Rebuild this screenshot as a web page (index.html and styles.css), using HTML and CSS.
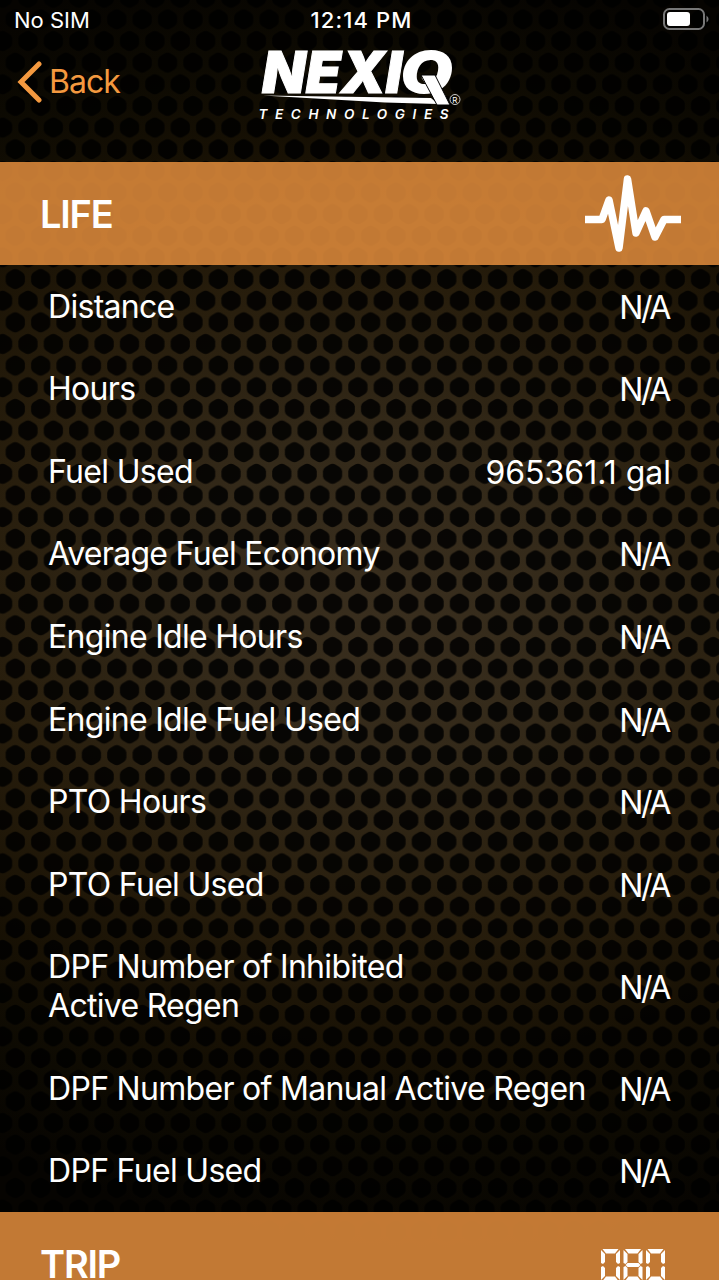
FILE: index.html
```
<!DOCTYPE html>
<html lang="en">
<head>
    <meta charset="UTF-8">
    <meta name="viewport" content="width=device-width, initial-scale=1.0">
    <title>Vehicle Data</title>
    <link rel="stylesheet" href="styles.css">
</head>
<body>
    <!-- honeycomb mesh behind the whole screen -->
    <svg class="mesh" width="719" height="1280" aria-hidden="true">
        <defs>
            <radialGradient id="glow" gradientUnits="userSpaceOnUse" cx="0" cy="0" r="1" gradientTransform="translate(385 605) rotate(8) scale(820 640)">
                <stop offset="0" stop-color="#392e1e"/>
                <stop offset="0.25" stop-color="#332919"/>
                <stop offset="0.5" stop-color="#271d0c"/>
                <stop offset="0.7" stop-color="#181104"/>
                <stop offset="0.85" stop-color="#0d0a02"/>
                <stop offset="1" stop-color="#060401"/>
            </radialGradient>
            <pattern id="holes" x="2.6" y="571.2" width="25.38" height="43.28" patternUnits="userSpaceOnUse">
                <g fill="#000" fill-opacity="0.86">
                    <path id="hex" d="M9.9 1.5Q12.7 .1 15.5 1.5L19.6 3.9Q22.2 5.5 22.3 8.3V13.3Q22.2 16.1 19.6 17.7L15.5 20.1Q12.7 21.5 9.9 20.1L5.8 17.7Q3.2 16.1 3.1 13.3V8.3Q3.2 5.5 5.8 3.9Z"/>
                    <use href="#hex" x="-12.69" y="21.64"/>
                    <use href="#hex" x="12.69" y="21.64"/>
                </g>
            </pattern>
        </defs>
        <rect width="719" height="1280" fill="url(#glow)"/>
        <rect width="719" height="1280" fill="url(#holes)"/>
    </svg>

    <header class="top">
        <div class="status">
            <span class="carrier">No SIM</span>
            <span class="time">12:14 PM</span>
            <svg class="battery" width="46" height="22" viewBox="0 0 46 22">
                <rect x="1" y="1" width="40" height="20" rx="5.5" fill="none" stroke="#777" stroke-width="2"/>
                <rect x="4" y="4" width="23" height="14" rx="3" fill="#fff"/>
                <path d="M43.5 7.5Q45.6 9 45.6 11T43.5 14.5Z" fill="#777"/>
            </svg>
        </div>
        <div class="nav">
            <a class="back">
                <svg width="26" height="42" viewBox="0 0 26 42">
                    <path d="M22 3L4 21L22 39" fill="none" stroke="#f4993f" stroke-width="5" stroke-linecap="round"/>
                </svg>
                <span>Back</span>
            </a>
            <svg class="logo" width="210" height="76" viewBox="0 0 210 76">
                <text class="logo-name" x="7" y="44.5" textLength="140" lengthAdjust="spacingAndGlyphs">NEXI</text>
                <text class="logo-name logo-q" x="145" y="45" textLength="53" lengthAdjust="spacingAndGlyphs">Q</text>
                <path d="M8 47.5L176 50L183 56L130 54.5Z" fill="#fff"/>
                <path d="M166 27H180L195 57H182Z" fill="#fff" stroke="#000" stroke-width="1"/>
                <circle cx="200" cy="51.5" r="5" fill="none" stroke="#ccc" stroke-width="1"/>
                <text class="logo-reg" x="197.3" y="54.5">R</text>
                <text class="logo-sub" x="3.5" y="71" textLength="190">TECHNOLOGIES</text>
            </svg>
        </div>
    </header>

    <div class="section">
        <h2>LIFE</h2>
        <svg class="pulse" width="96" height="80" viewBox="0 0 96 80">
            <path d="M0 45.5H17L24 26L34 74L42.5 5L51 59L61 37L70 63L79 45.5H96" fill="none" stroke="#fff" stroke-width="7.5" stroke-linejoin="round"/>
        </svg>
    </div>

    <ul class="list">
        <li><span>Distance</span><span class="value na">N/A</span></li>
        <li><span>Hours</span><span class="value na">N/A</span></li>
        <li><span>Fuel Used</span><span class="value">965361.1 gal</span></li>
        <li><span>Average Fuel Economy</span><span class="value na">N/A</span></li>
        <li><span>Engine Idle Hours</span><span class="value na">N/A</span></li>
        <li><span>Engine Idle Fuel Used</span><span class="value na">N/A</span></li>
        <li><span>PTO Hours</span><span class="value na">N/A</span></li>
        <li><span>PTO Fuel Used</span><span class="value na">N/A</span></li>
        <li class="tall"><span>DPF Number of Inhibited<br>Active Regen</span><span class="value na">N/A</span></li>
        <li><span>DPF Number of Manual Active Regen</span><span class="value na">N/A</span></li>
        <li><span>DPF Fuel Used</span><span class="value na">N/A</span></li>
    </ul>

    <div class="section trip">
        <h2>TRIP</h2>
        <svg class="counter" width="66" height="36" viewBox="0 0 66 36">
            <defs>
                <path id="bar" d="M1.5 0H17.5L14 4.5H5Z"/>
                <path id="side" d="M0 1L4 5V13L2 15L0 14Z"/>
                <g id="zero">
                    <use href="#bar"/>
                    <use href="#side"/>
                    <use href="#side" transform="translate(19 0) scale(-1 1)"/>
                    <use href="#side" transform="translate(0 32) scale(1 -1)"/>
                    <use href="#side" transform="translate(19 32) scale(-1 -1)"/>
                    <use href="#bar" transform="translate(0 32) scale(1 -1)"/>
                </g>
            </defs>
            <g fill="#fff">
                <use href="#zero" x="1"/>
                <use href="#zero" x="23.5"/>
                <path d="M27.5 14H38.5L40.5 16L38.5 18H27.5L25.5 16Z"/>
                <use href="#zero" x="46"/>
            </g>
        </svg>
    </div>
</body>
</html>
```
FILE: styles.css
```
* {
    box-sizing: border-box;
}
body {
    margin: 0;
    height: 1280px;
    overflow: hidden;
    background: #000;
    color: #fff;
    font-family: Inter, "Liberation Sans", sans-serif;
}
svg {
    display: block;
}
.mesh {
    position: absolute;
    top: 0;
    left: 0;
    z-index: -1;
}
.top {
    height: 162px;
}
.status {
    display: grid;
    grid-template-columns: 1fr auto 1fr;
    align-items: center;
    height: 40px;
    padding: 0 10px 0 14px;
    font-size: 22px;
    line-height: 26px;
}
.time {
    font-weight: 500;
    letter-spacing: 1.1px;
}
.battery {
    justify-self: end;
    margin-top: -2px;
}
.nav {
    display: grid;
    grid-template-columns: 1fr 210px 1fr;
    height: 82px;
}
.back {
    display: flex;
    align-items: center;
    gap: 6px;
    padding-left: 17px;
    color: #f4993f;
    font-size: 32px;
    letter-spacing: -1px;
}
.back span {
    padding-bottom: 1px;
}
.logo {
    margin-top: 8px;
}
.logo text {
    fill: #fff;
    font-style: italic;
}
.logo-name {
    font-size: 58px;
    font-weight: 900;
    stroke: #fff;
    stroke-width: 1px;
}
.logo-q {
    stroke: none;
}
.logo .logo-reg {
    font-size: 8px;
    font-style: normal;
}
.logo-sub {
    font-size: 13.5px;
    font-weight: 600;
}
.section {
    display: flex;
    justify-content: space-between;
    align-items: center;
    height: 103px;
    padding: 0 38px 0 40px;
    background: rgba(226, 141, 60, 0.86);
}
.section h2 {
    margin: 0;
    font-size: 38px;
    font-weight: 600;
    letter-spacing: -1.2px;
}
.section.trip {
    padding-right: 53px;
}
.section.trip h2 {
    padding-top: 2px;
}
.counter {
    margin-top: 8px;
}
.list {
    margin: 0;
    padding: 0;
    list-style: none;
}
.list li {
    display: flex;
    justify-content: space-between;
    align-items: center;
    height: 82.55px;
    padding: 0 48px;
    font-size: 32px;
    line-height: 39px;
    letter-spacing: -0.7px;
    white-space: nowrap;
}
.list .tall {
    height: 121.5px;
}
.list .value {
    padding-top: 2px;
    letter-spacing: 0;
}
.list .na {
    padding-right: 2px;
    letter-spacing: -2.4px;
}
```
